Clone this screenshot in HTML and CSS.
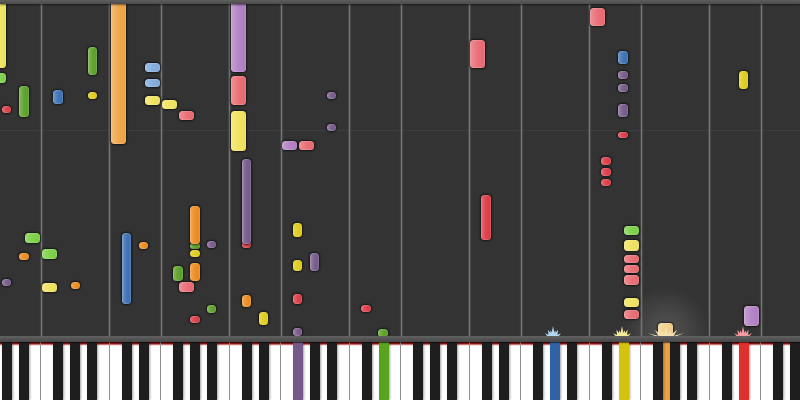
FILE: index.html
```html
<!DOCTYPE html>
<html>
<head>
    <title>Piano roll</title>
    <link rel="stylesheet" href="styles.css">
</head>
<body>
    <div class="roll">
        <div class="roll-top"></div>
        <div class="beat-line"></div>
        <div class="glow"></div>
        <div id="gridLines"></div>
        <div id="notes"></div>
        <div id="sparks"></div>
    </div>
    <div class="rail"></div>
    <div class="keyboard">
        <div class="white-keys" id="whiteKeys"></div>
        <div id="blackKeys"></div>
    </div>
    <script src="page.js"></script>
</body>
</html>
```

FILE: styles.css
```css
body {
    margin: 0;
    width: 800px;
    height: 400px;
    overflow: hidden;
    background-color: #333;
    display: flex;
    flex-direction: column;
}

.roll {
    position: relative;
    height: 336px;
    flex: none;
    overflow: hidden;
    background-color: #333333;
}
.roll-top {
    position: absolute;
    top: 0;
    left: 0;
    right: 0;
    height: 4px;
    z-index: 5;
    background: linear-gradient(#5e5e5e, #4c4c4c);
    box-shadow: 0 1px 2px rgba(0, 0, 0, 0.5);
}
.beat-line {
    position: absolute;
    top: 130px;
    left: 0;
    right: 0;
    height: 1px;
    background-color: #3d3d3d;
}
.grid-line {
    position: absolute;
    top: 0;
    bottom: 0;
    width: 1px;
    background-color: #727272;
    box-shadow: 0 0 1px 0.5px rgba(110, 110, 110, 0.75);
}
.glow {
    position: absolute;
    left: 621px;
    top: 286px;
    width: 90px;
    height: 90px;
    background: radial-gradient(circle, rgba(255, 255, 255, 0.17), rgba(255, 255, 255, 0) 70%);
}

.note {
    position: absolute;
    box-sizing: border-box;
    border-radius: 3.5px;
    background-image: linear-gradient(90deg, rgba(255, 255, 255, 0.26), rgba(255, 255, 255, 0.05) 50%, rgba(0, 0, 0, 0.02));
    box-shadow: 0 0 2px 1px rgba(0, 0, 0, 0.6), inset 0 0 1px 0.5px rgba(255, 255, 255, 0.3);
    filter: blur(0.45px);
}
.yellow { background-color: #dfcc17; }
.yellow-light { background-color: #f0e35c; }
.green { background-color: #5aa025; }
.green-light { background-color: #7ad045; }
.blue { background-color: #3b70b4; }
.blue-light { background-color: #80aadc; }
.orange { background-color: #ec8a1e; }
.orange-light { background-color: #f0a445; }
.purple { background-color: #75598a; }
.purple-light { background-color: #b07fc4; }
.red { background-color: #dc3a44; }
.pink { background-color: #e96a72; }
.cream { background-color: #f2d08a; }

.spark {
    position: absolute;
    top: 325px;
    overflow: visible;
    filter: blur(0.3px);
}

.rail {
    height: 6px;
    flex: none;
    background: linear-gradient(#626262, #474747);
    box-shadow: 0 1px 1px rgba(0, 0, 0, 0.5);
    position: relative;
    z-index: 3;
}

.keyboard {
    position: relative;
    flex: 1;
    overflow: hidden;
}
.white-keys {
    display: flex;
    height: 100%;
    margin-left: -11px;
}
.white-key {
    width: calc(120px / 7);
    flex: none;
    box-sizing: border-box;
    border-left: 1px solid #8e8e8e;
    background: linear-gradient(#700a0a 0, #9c1a1a 2px, #eec4c4 3px, #ffffff 4px);
}
.white-key.orange {
    background: #eda044;
}
.black-key {
    position: absolute;
    top: -1px;
    bottom: 0;
    width: 10px;
    background-color: #1e1e1e;
    box-shadow: 1px 0 2px rgba(50, 50, 50, 0.45);
}
.black-key.purple { background-color: #75598a; }
.black-key.green { background-color: #5aa31c; }
.black-key.blue { background-color: #2f63a6; }
.black-key.yellow { background-color: #d4c20c; }
.black-key.red { background-color: #e0302e; }
```

FILE: page.js
```js
// x, y, width, height, colour
const notes = [
    [-3, 0, 9, 68, 'yellow-light'],
    [-3, 73, 9, 10, 'green-light'],
    [2, 106, 9, 7, 'red'],
    [19, 86, 10, 31, 'green'],
    [53, 90, 10, 14, 'blue'],
    [88, 47, 9, 28, 'green'],
    [88, 92, 9, 7, 'yellow'],
    [110.5, 0, 15.5, 144, 'orange-light'],
    [145, 63, 15, 9, 'blue-light'],
    [145, 79, 15, 8, 'blue-light'],
    [145, 96, 15, 9, 'yellow-light'],
    [162, 100, 15, 9, 'yellow-light'],
    [179, 111, 15, 9, 'pink'],
    [231, 0, 15, 72, 'purple-light'],
    [231, 76, 15, 29, 'pink'],
    [231, 111, 15, 40, 'yellow-light'],
    [242, 241, 9, 7, 'red'],
    [242, 159, 9, 85, 'purple'],
    [470, 40, 15, 28, 'pink'],
    [327, 92, 9, 7, 'purple'],
    [327, 124, 9, 7, 'purple'],
    [282, 141, 15, 9, 'purple-light'],
    [299, 141, 15, 9, 'pink'],
    [590, 8, 15, 18, 'pink'],
    [618, 51, 10, 13, 'blue'],
    [618, 71, 10, 8, 'purple'],
    [618, 84, 10, 8, 'purple'],
    [618, 104, 10, 13, 'purple'],
    [618, 132, 10, 6, 'red'],
    [601, 157, 10, 8, 'red'],
    [601, 168, 10, 8, 'red'],
    [601, 179, 10, 7, 'red'],
    [738.5, 71, 9.5, 18, 'yellow'],
    [624, 226, 15, 9, 'green-light'],
    [624, 240, 15, 11, 'yellow-light'],
    [624, 255, 15, 8, 'pink'],
    [624, 265, 15, 8, 'pink'],
    [624, 275, 15, 10, 'pink'],
    [624, 298, 15, 9, 'yellow-light'],
    [624, 310, 15, 9, 'pink'],
    [744, 306, 15, 20, 'purple-light'],
    [658, 323, 15, 13, 'cream'],
    [25, 233, 15, 10, 'green-light'],
    [19, 253, 10, 7, 'orange'],
    [42, 249, 15, 10, 'green-light'],
    [2, 279, 9, 7, 'purple'],
    [42, 283, 15, 9, 'yellow-light'],
    [71, 282, 9, 7, 'orange'],
    [122, 233, 9, 71, 'blue'],
    [139, 242, 9, 7, 'orange'],
    [190, 243, 10, 6, 'green'],
    [190, 206, 10, 38, 'orange'],
    [190, 250, 10, 7, 'yellow'],
    [207, 241, 9, 7, 'purple'],
    [173, 266, 10, 15, 'green'],
    [190, 263, 10, 18, 'orange'],
    [179, 282, 15, 10, 'pink'],
    [242, 295, 9, 12, 'orange'],
    [207, 305, 9, 8, 'green'],
    [190, 316, 10, 7, 'red'],
    [259, 312, 9, 13, 'yellow'],
    [293, 223, 9, 14, 'yellow'],
    [293, 260, 9, 11, 'yellow'],
    [310, 253, 9, 18, 'purple'],
    [293, 294, 9, 10, 'red'],
    [361, 305, 10, 7, 'red'],
    [293, 328, 9, 8, 'purple'],
    [378, 329, 10, 8, 'green'],
    [481, 195, 10, 45, 'red']
];

// centre x, half width, colour
const sparks = [
    [552.5, 8, '#b4d8f4'],
    [621.5, 9, '#f4ec9c'],
    [666, 18, '#f4e4b4'],
    [743, 9, '#f49aa2']
];

const keyWidth = 120 / 7;
const pressedWhite = { 39: 'orange' };
const pressedBlack = { 298: 'purple', 384: 'green', 555: 'blue', 624: 'yellow', 744: 'red' };

function addElement(parentId, className, left) {
    const element = document.createElement('div');
    element.className = className;
    if (left !== undefined) element.style.left = `${left}px`;
    document.getElementById(parentId).appendChild(element);
    return element;
}

// C and F lines, one pair per octave
for (let octave = 0; octave < 7; octave++) {
    addElement('gridLines', 'grid-line', octave * 120 - 11);
    addElement('gridLines', 'grid-line', octave * 120 - 11 + keyWidth * 3 + 0.5);
}

notes.forEach(([x, y, width, height, colour]) => {
    const note = addElement('notes', `note ${colour}`, x);
    note.style.top = `${y}px`;
    note.style.width = `${width}px`;
    note.style.height = `${height}px`;
});

sparks.forEach(([x, half, colour]) => {
    const spikes = [-1, -0.62, -0.3, 0, 0.3, 0.62, 1].map((t, i) => {
        const tall = i % 2 ? 10 : 7;
        const tipY = 11 - tall * (1 - Math.abs(t) * 0.6);
        const tipX = half + t * half;
        const base = half + t * half * 0.5;
        return `<polygon points="${base - 2},11 ${tipX},${tipY} ${base + 2},11"/>`;
    }).join('');
    document.getElementById('sparks').innerHTML +=
        `<svg class="spark" style="left:${x - half}px" width="${half * 2}" height="11" fill="${colour}">${spikes}</svg>`;
});

for (let i = 0; i < 48; i++) {
    addElement('whiteKeys', `white-key ${pressedWhite[i] || ''}`);
}

// black keys sit at the same five places in every octave
[7, 24, 58, 75, 92].forEach((centre) => {
    for (let octave = 0; octave < 7; octave++) {
        const x = centre + octave * 120;
        addElement('blackKeys', `black-key ${pressedBlack[x] || ''}`, x - 5);
    }
});
```
